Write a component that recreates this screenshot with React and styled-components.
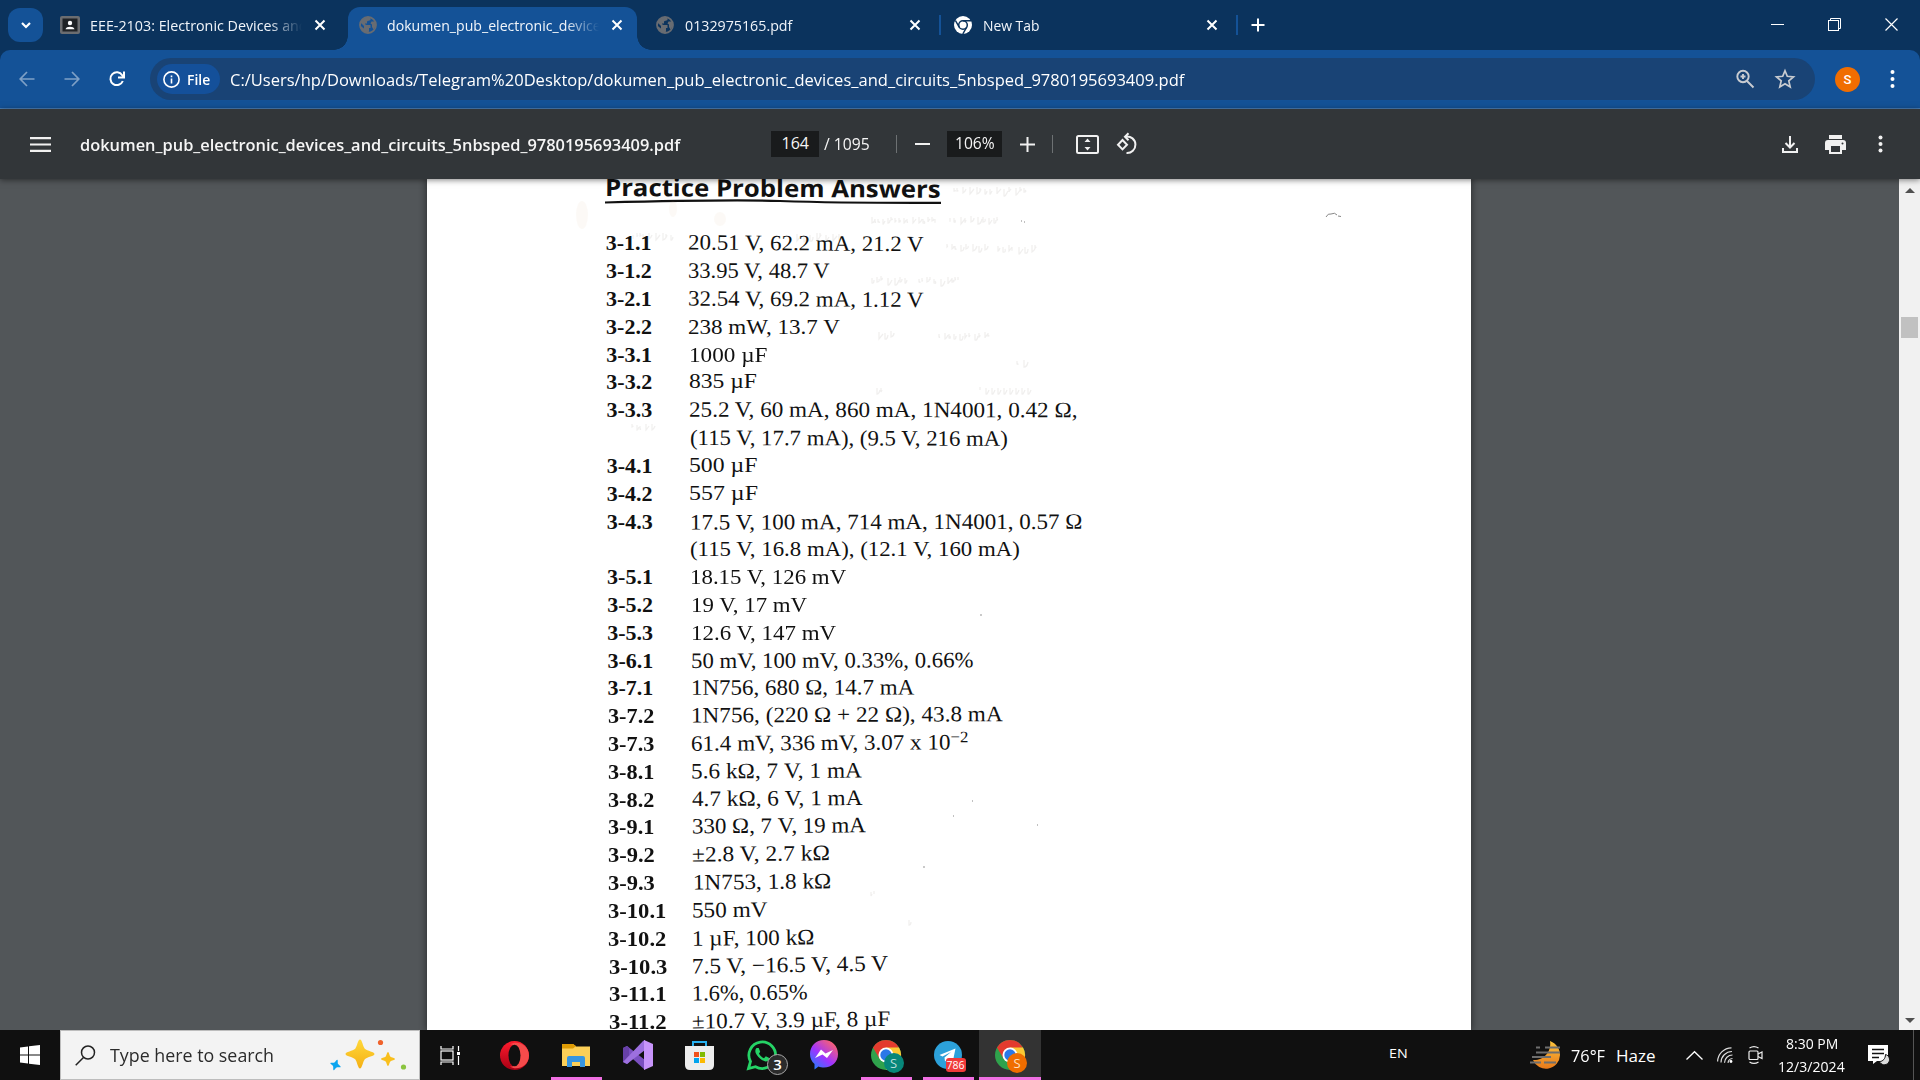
import React, { useLayoutEffect, useRef, useState } from "react";
import styled, { createGlobalStyle, css } from "styled-components";

const ui = `"Open Sans", "Noto Sans", sans-serif`;
const book = `"Liberation Serif", serif`;

const Global = createGlobalStyle`
  * { box-sizing: border-box; }
  body { margin: 0; overflow: hidden; background: #0b335d; font-family: ${ui}; }
  svg { display: block; flex: none; overflow: visible; }
`;

/* Text set to an exact measure, as in justified type */
const Measure = styled.span`
  display: inline-block;
  flex: none;
  width: ${(p) => p.$w}px;
  white-space: pre;
`;
const Glyphs = styled.span`
  display: inline-block;
  transform-origin: 0 75%;
`;
function Fit({ w, tilt = 0, lift = 0, children }) {
  const ref = useRef(null);
  const [k, setK] = useState(1);
  useLayoutEffect(() => {
    setK(w / ref.current.offsetWidth);
  }, [w]);
  return (
    <Measure $w={w}>
      <Glyphs ref={ref} style={{ transform: `translateY(${lift}px) rotate(${tilt}deg) scaleX(${k})` }}>
        {children}
      </Glyphs>
    </Measure>
  );
}

const Screen = styled.div`
  width: 1920px;
  height: 1080px;
  display: flex;
  flex-direction: column;
  overflow: hidden;
`;

/* ---------- tab strip ---------- */
const TabStrip = styled.header`
  height: 50px;
  flex: none;
  display: flex;
  align-items: flex-start;
  padding-left: 8px;
  background: #0b335d;
`;
const TabSearch = styled.button`
  width: 35px;
  height: 34px;
  margin-top: 8px;
  padding: 0;
  border: 0;
  border-radius: 12px;
  background: #145297;
  display: grid;
  place-items: center;
`;
const Tab = styled.div`
  position: relative;
  display: flex;
  align-items: center;
  width: ${(p) => p.$w}px;
  height: 43px;
  margin-top: 7px;
  padding: 0 ${(p) => p.$pr || 14}px 7px ${(p) => p.$pl}px;
  color: #f1f5fa;
  font-size: 14.5px;
  ${(p) =>
    p.$active &&
    css`
      background: #145297;
      border-radius: 12px 12px 0 0;
      &::before, &::after {
        content: "";
        position: absolute;
        bottom: 0;
        width: 14px;
        height: 14px;
      }
      &::before { left: -14px; background: radial-gradient(circle at 0 0, transparent 13.5px, #145297 14px); }
      &::after { right: -14px; background: radial-gradient(circle at 100% 0, transparent 13.5px, #145297 14px); }
    `}
`;
const TabTitle = styled.div`
  flex: 1;
  min-width: 0;
  overflow: hidden;
  margin-left: ${(p) => p.$gap}px;
  line-height: 24px;
  padding-top: 1px;
  ${(p) => p.$fade && css`mask-image: linear-gradient(90deg, #000 178px, transparent 212px);`}
`;
const TabDivider = styled.i`
  width: 2px;
  height: 20px;
  margin-top: 15px;
  background: #145297;
`;
const NewTab = styled.div`
  width: 40px;
  height: 50px;
  display: grid;
  place-items: center;
`;
const WindowButtons = styled.div`
  margin-left: auto;
  display: flex;
  height: 50px;
`;
const WinButton = styled.div`
  width: 57px;
  display: grid;
  place-items: center;
  padding-bottom: 1px;
`;

/* ---------- address bar ---------- */
const Toolbar = styled.div`
  height: 59px;
  flex: none;
  display: flex;
  align-items: center;
  padding: 0 0 0 17px;
  background: #145297;
  border-radius: 10px 10px 0 0;
  border-bottom: 1px solid #4a7fb8;
`;
const NavButton = styled.div`
  width: ${(p) => p.$w || 20}px;
  margin-right: ${(p) => p.$mr}px;
  display: grid;
  place-items: center;
  opacity: ${(p) => (p.$dim ? 0.45 : 1)};
`;
const Omnibox = styled.div`
  width: 1665px;
  height: 42px;
  border-radius: 21px;
  background: #194375;
  display: flex;
  align-items: center;
  padding: 0 20px 0 7px;
  color: #fff;
  font-size: 17px;
`;
const Url = styled.div`
  padding-top: 1px;
`;
const FileChip = styled.div`
  width: 63px;
  height: 30px;
  border-radius: 15px;
  background: #14509a;
  display: flex;
  align-items: center;
  gap: 7px;
  padding-left: 6px;
  margin-right: 10px;
  font-size: 14.5px;
  font-weight: 600;
`;
const OmniActions = styled.div`
  margin-left: auto;
  display: flex;
  gap: 20px;
`;
const Avatar = styled.div`
  width: 25px;
  height: 25px;
  border-radius: 50%;
  margin: 0 30px 0 20px;
  background: #f06d00;
  color: #fff;
  font: 500 13px/25px Roboto, sans-serif;
  text-align: center;
`;

/* ---------- PDF toolbar ---------- */
const PdfBar = styled.div`
  position: relative;
  z-index: 2;
  height: 70px;
  flex: none;
  display: flex;
  align-items: center;
  padding: 0 32px 0 30px;
  background: #323639;
  color: #f5f5f5;
  font-size: 16px;
  box-shadow: 0 1px 6px rgba(0, 0, 0, 0.5);
`;
const PdfTitle = styled.div`
  width: 720px;
  padding-left: 29px;
  font-size: 16.8px;
  font-weight: 600;
`;
const Field = styled.div`
  width: ${(p) => p.$w}px;
  height: 26px;
  line-height: 25px;
  background: #191b1c;
  display: flex;
  justify-content: center;
`;
const PageTotal = styled.div`
  width: 77px;
  padding-left: 5px;
`;
const Rule = styled.i`
  width: 1px;
  height: 18px;
  background: #6d7173;
`;
const PdfIcon = styled.div`
  width: ${(p) => p.$w}px;
  display: grid;
  place-items: center;
`;
const FitGroup = styled.div`
  display: flex;
  align-items: center;
  gap: 17px;
  padding-left: 23px;
`;
const PdfActions = styled.div`
  margin-left: auto;
  display: flex;
  align-items: center;
`;

/* ---------- document ---------- */
const Viewer = styled.main`
  height: 851px;
  flex: none;
  display: flex;
  background: #525659;
  overflow: hidden;
`;
const Canvas = styled.div`
  flex: 1;
  padding-left: 427px;
`;
const Sheet = styled.article`
  position: relative;
  width: 1044px;
  height: 100%;
  overflow: hidden;
  background: #fff;
  color: #111;
  padding-left: 178px;
`;
const SheetEdge = styled.div`
  width: 1044px;
  height: 100%;
  box-shadow: 0 0 7px 1px rgba(0, 0, 0, 0.45);
`;
const Heading = styled.h1`
  margin: -8px 0 0;
  height: 51px;
  font: 700 24px/31px ${ui};
`;
const Underline = styled.div`
  height: 8px;
  margin-top: -24px;
`;
const Ghosts = styled.svg`
  position: absolute;
  left: 0;
  top: 0;
`;
const Rows = styled.div`
  padding: 23.4px 0 0 0.8px;
`;
const Row = styled.div`
  display: flex;
  height: 27.82px;
  line-height: 27.82px;
  font-family: ${book};
  font-size: 22px;
`;
const Label = styled.div`
  width: ${(p) => 82.5 - p.$dx}px;
  margin-left: ${(p) => p.$dx}px;
  font-weight: 700;
`;
const Answer = styled.div`
  margin-left: ${(p) => p.$dx}px;
`;
const Sup = styled.sup`
  font-size: 16px;
  line-height: 0;
  vertical-align: 7px;
`;
const Scroll = styled.div`
  width: 21px;
  background: #f1f1f1;
  display: flex;
  flex-direction: column;
  align-items: center;
`;
const Arrow = styled.i`
  border: 5px solid transparent;
  ${(p) => (p.$up ? "border-bottom-color: #505050; border-top: 0; margin-top: 9px;" : "border-top-color: #505050; border-bottom: 0; margin: auto 0 7px;")}
`;
const Thumb = styled.i`
  width: 17px;
  height: 21px;
  margin-top: 124px;
  background: #c1c1c1;
`;

/* [label, label width, answer, answer width, start x, tilt, lift] */
const answers = [
  ["3-1.1", 46, "20.51 V, 62.2 mA, 21.2 V", 235.5, 0, 0.45, -0.5],
  ["3-1.2", 46, "33.95 V, 48.7 V", 141.5, 0, 0.1, -0.2],
  ["3-2.1", 46, "32.54 V, 69.2 mA, 1.12 V", 235.5, 0, 0.35, -0.4],
  ["3-2.2", 46, "238 mW, 13.7 V", 152, 0, 0, -0.5],
  ["3-3.1", 46, "1000 µF", 78, 1, 0, 0],
  ["3-3.2", 46, "835 µF", 67.5, 0.5, 0, -0.7],
  ["3-3.3", 46, "25.2 V, 60 mA, 860 mA, 1N4001, 0.42 Ω,", 388, 1, 0.1, -0.3],
  ["", 0, "(115 V, 17.7 mA), (9.5 V, 216 mA)", 318, 2, 0.15, 0],
  ["3-4.1", 46, "500 µF", 68, 0.5, 0, -0.7],
  ["3-4.2", 46, "557 µF", 68.5, 0.5, 0, -0.7],
  ["3-4.3", 46, "17.5 V, 100 mA, 714 mA, 1N4001, 0.57 Ω", 392.5, 1.5, -0.1, 0.5],
  ["", 0, "(115 V, 16.8 mA), (12.1 V, 160 mA)", 330, 2, 0, 0.3],
  ["3-5.1", 46, "18.15 V, 126 mV", 156, 2.2, 0, 0],
  ["3-5.2", 46, "19 V, 17 mV", 116.5, 2.8, 0, 0],
  ["3-5.3", 46, "12.6 V, 147 mV", 145, 2.8, 0, 0],
  ["3-6.1", 46, "50 mV, 100 mV, 0.33%, 0.66%", 282.5, 2.8, -0.15, 0],
  ["3-7.1", 46, "1N756, 680 Ω, 14.7 mA", 223.5, 3.2, -0.05, -0.3],
  ["3-7.2", 46.5, "1N756, (220 Ω + 22 Ω), 43.8 mA", 312, 3.2, -0.25, -0.5],
  ["3-7.3", 46.5, <>61.4 mV, 336 mV, 3.07 x 10<Sup>−2</Sup></>, 277, 3.2, -0.3, -0.3],
  ["3-8.1", 46.5, "5.6 kΩ, 7 V, 1 mA", 170.5, 3.2, -0.3, -0.6],
  ["3-8.2", 46.5, "4.7 kΩ, 6 V, 1 mA", 170, 3.6, -0.4, -0.9],
  ["3-9.1", 46.5, "330 Ω, 7 V, 19 mA", 174, 3.6, -0.4, -0.6],
  ["3-9.2", 47, "±2.8 V, 2.7 kΩ", 138, 3.3, -0.6, -0.4],
  ["3-9.3", 47, "1N753, 1.8 kΩ", 138, 4.3, -0.5, -0.5],
  ["3-10.1", 58.5, "550 mV", 76, 3.6, -0.5, -0.6],
  ["3-10.2", 58.5, "1 µF, 100 kΩ", 123, 4.2, -0.6, -0.3],
  ["3-10.3", 58.5, "7.5 V, −16.5 V, 4.5 V", 196, 3.6, -0.9, -0.4],
  ["3-11.1", 58, "1.6%, 0.65%", 116, 4.2, -0.7, -0.4],
  ["3-11.2", 58, "±10.7 V, 3.9 µF, 8 µF", 198, 3.4, -0.8, -0.4],
];

/* Faint show-through of the reverse side of the scanned leaf: [x, y, length] */
const ghostLines = [
  [527, 8, 75], [445, 38, 66], [523, 37, 50],
  [520, 65, 40], [571, 66, 40], [445, 97, 34], [492, 98, 44],
  [370, 54, 46], [206, 54, 40], [452, 152, 14], [512, 153, 50], [590, 180, 10], [553, 207, 50], [450, 208, 8],
  [205, 245, 24], [444, 712, 8], [482, 740, 6],
];
const wiggle = (x, y, n) => {
  let d = "";
  for (let i = 0, s = x + y; i < n; s = (s * 37 + 11) % 101, i += 3 + (s % 5)) {
    const h = 3 + (s % 5);
    d += `M${x + i} ${y + (s % 3)}v${h}q${s % 4} ${(s % 3) - 1} ${s % 5} -${h - 2}`;
  }
  return d;
};

/* ---------- taskbar ---------- */
const Taskbar = styled.footer`
  height: 50px;
  flex: none;
  display: flex;
  background: #101010;
  color: #fff;
`;
const Start = styled.div`
  width: 60px;
  display: grid;
  place-items: center;
`;
const Search = styled.div`
  width: 360px;
  display: flex;
  align-items: center;
  padding-left: 14px;
  background: #f3f3f3;
  border: 1px solid #bdbdbd;
  color: #2b2b2b;
  font-size: 17.5px;
`;
const SearchText = styled.div`
  margin: 0 56px 0 14px;
`;
const App62 = styled.div`
  position: relative;
  width: ${(p) => p.$w || 62}px;
  padding-right: ${(p) => p.$pr || 0}px;
  display: grid;
  place-items: center;
  background: ${(p) => (p.$active ? "#333" : "transparent")};
  ${(p) =>
    (p.$open || p.$active) &&
    css`
      &::after {
        content: "";
        position: absolute;
        bottom: 0;
        left: ${p.$active ? 0 : 6}px;
        right: ${p.$active ? 0 : 5}px;
        height: 3px;
        background: #f06fe2;
      }
    `}
`;
const Badge = styled.span`
  position: absolute;
  left: ${(p) => p.$x}px;
  top: ${(p) => p.$y}px;
  width: ${(p) => p.$w}px;
  height: ${(p) => p.$h}px;
  line-height: ${(p) => p.$h - (p.$ring ? 2 : 0)}px;
  border-radius: ${(p) => p.$r}px;
  border: ${(p) => (p.$ring ? "1px solid #a8a8a8" : "0")};
  background: ${(p) => p.$bg};
  color: ${(p) => p.$fg || "#fff"};
  font-size: ${(p) => p.$fs}px;
  font-weight: ${(p) => p.$fw || 400};
  text-align: center;
`;
const Tray = styled.div`
  margin-left: auto;
  width: 531px;
  display: flex;
  align-items: center;
`;
const Slot = styled.div`
  width: ${(p) => p.$w}px;
  font-size: ${(p) => p.$fs || 17}px;
  flex: none;
`;
const Clock = styled.div`
  width: 89px;
  height: 50px;
  display: flex;
  flex-direction: column;
  align-items: center;
  padding-top: 2px;
  font-size: 14.5px;
  line-height: 23px;
`;
const Peek = styled.i`
  width: 1px;
  height: 50px;
  background: #555;
`;

/* ---------- icons ---------- */
const Cross = ({ s = 10, w = 2, c = "#fff" }) => (
  <svg width={s} height={s} viewBox={`0 0 ${s} ${s}`} stroke={c} strokeWidth={w}>
    <path d={`M.5 .5L${s - 0.5} ${s - 0.5}M${s - 0.5} .5L.5 ${s - 0.5}`} />
  </svg>
);
const Globe = () => (
  <svg width="18" height="18" viewBox="0 0 18 18">
    <circle cx="9" cy="9" r="8" fill="none" stroke="#686c72" strokeWidth="1.8" />
    <path d="M2 5C4 2 8 .6 11.500 1.500V4C10 5 9 4.500 8 5.500V7.500H6C6 9 7 9 9 9H11.500V12H10V15.500L8.500 17C4 16.500 1 13 1 9.500L5 12.500V10L1 6Z M12.500 5.500L16 5.500L17 10L14.500 13.500L13 11V8.500L11.500 7.500Z" fill="#686c72" />
  </svg>
);
const Dots = ({ c = "#fff", gap = 7 }) => (
  <svg width="5" height="20" viewBox="0 0 5 20" fill={c}>
    <circle cx="2.500" cy={10 - gap} r="2" /><circle cx="2.500" cy="10" r="2" /><circle cx="2.500" cy={10 + gap} r="2" />
  </svg>
);
const Chrome = () => (
  <svg width="30" height="30" viewBox="0 0 30 30">
    <circle cx="15" cy="15" r="15" fill="#2fa24c" />
    <path d="M2 7.500A15 15 0 0 1 28 7.500L15 9L8.500 18.700Z" fill="#e33b2e" />
    <path d="M28 7.500A15 15 0 0 1 15 30L21.500 18.700L15 7.500Z" fill="#fcc934" />
    <circle cx="15" cy="15" r="7.500" fill="#fff" /><circle cx="15" cy="15" r="5.700" fill="#2a78e8" />
  </svg>
);
const Star4 = ({ x, y, r, f, rot = 0 }) => (
  <path transform={`translate(${x} ${y}) rotate(${rot}) scale(${r})`} fill={f}
    d="M0 -1C.14 -1 .19 -.55 .33 -.36C.5 -.2 1 -.15 1 0C1 .15 .5 .2 .33 .36C.19 .55 .14 1 0 1C-.14 1 -.19 .55 -.33 .36C-.5 .2 -1 .15 -1 0C-1 -.15 -.5 -.2 -.33 -.36C-.19 -.55 -.14 -1 0 -1Z" />
);

function Tabs() {
  return (
    <TabStrip>
      <TabSearch aria-label="Search tabs">
        <svg width="10" height="7" viewBox="0 0 10 7"><path d="M1 1L5 5L9 1" fill="none" stroke="#fff" strokeWidth="2.200" /></svg>
      </TabSearch>
      <Tab $w={305} $pl={17} $pr={23}>
        <svg width="20" height="18" viewBox="0 0 20 18"><rect width="20" height="18" rx="2" fill="#6b6d70" /><rect x="2.500" y="2.500" width="15" height="13" fill="#202326" /><circle cx="10" cy="7" r="2.200" fill="#fff" /><path d="M5.500 13.200C6 9.900 14 9.900 14.500 13.200Z" fill="#fff" /></svg>
        <TabTitle $gap={10} $fade><Fit w={218}>EEE-2103: Electronic Devices and</Fit></TabTitle>
        <Cross />
      </Tab>
      <Tab $active $w={289} $pl={11} $pr={15}>
        <Globe />
        <TabTitle $gap={10} $fade><Fit w={220}>dokumen_pub_electronic_devices</Fit></TabTitle>
        <Cross />
      </Tab>
      <Tab $w={302} $pl={19} $pr={19}>
        <Globe />
        <TabTitle $gap={11}><Fit w={107}>0132975165.pdf</Fit></TabTitle>
        <Cross />
      </Tab>
      <TabDivider />
      <Tab $w={295} $pl={13} $pr={19}>
        <svg width="18" height="18" viewBox="0 0 18 18"><circle cx="9" cy="9" r="9" fill="#fff" /><circle cx="9" cy="9" r="4.300" fill="none" stroke="#0b335d" strokeWidth="1.500" /><path d="M9 4.700H17M5.200 11.200L1.400 4.500M12.700 11.200L8.800 18" stroke="#0b335d" strokeWidth="1.500" /></svg>
        <TabTitle $gap={11}><Fit w={56.5}>New Tab</Fit></TabTitle>
        <Cross />
      </Tab>
      <TabDivider />
      <NewTab><svg width="14" height="14" viewBox="0 0 14 14"><path d="M7 .5V13.500M.5 7H13.500" stroke="#fff" strokeWidth="2" /></svg></NewTab>
      <WindowButtons>
        <WinButton><svg width="13" height="13"><path d="M0 6.500H13" stroke="#fff" /></svg></WinButton>
        <WinButton><svg width="13" height="13" fill="none" stroke="#fff"><rect x=".5" y="2.500" width="10" height="10" /><path d="M2.500 2.500V.5H12.500V10.500H10.500" /></svg></WinButton>
        <WinButton><Cross s={13} w={1.2} /></WinButton>
      </WindowButtons>
    </TabStrip>
  );
}

function AddressBar() {
  const arrow = { fill: "none", stroke: "#fff", strokeWidth: 1.7 };
  return (
    <Toolbar>
      <NavButton $mr={25} $dim><svg width="16" height="16" viewBox="0 0 16 16" {...arrow}><path d="M15.500 8H1.500M8 1L1.200 8L8 15" /></svg></NavButton>
      <NavButton $mr={25} $dim><svg width="16" height="16" viewBox="0 0 16 16" {...arrow}><path d="M.5 8H14.500M8 1L14.800 8L8 15" /></svg></NavButton>
      <NavButton $mr={23}><svg width="16" height="16" viewBox="0 0 16 16" fill="none" stroke="#fff" strokeWidth="2"><path d="M13.800 10A6.400 6.400 0 1 1 13.200 4.200L14.500 6M15 .5V6.500H9" /></svg></NavButton>
      <Omnibox>
        <FileChip>
          <svg width="17" height="17" viewBox="0 0 17 17"><circle cx="8.500" cy="8.500" r="7.600" fill="none" stroke="#fff" strokeWidth="1.600" /><path d="M8.500 7.500V12.500M8.500 4.500V6.200" stroke="#fff" strokeWidth="1.600" /></svg>
          <Fit w={23}>File</Fit>
        </FileChip>
        <Url><Fit w={954}>C:/Users/hp/Downloads/Telegram%20Desktop/dokumen_pub_electronic_devices_and_circuits_5nbsped_9780195693409.pdf</Fit></Url>
        <OmniActions>
          <svg width="20" height="20" viewBox="0 0 20 20" fill="none" stroke="#c9ccd1" strokeWidth="1.900"><circle cx="8" cy="7.500" r="5.700" /><path d="M12 12L18.500 18.500M8 5V10M5.500 7.500H10.500" /></svg>
          <svg width="20" height="20" viewBox="0 0 20 20" fill="none" stroke="#c9ccd1" strokeWidth="1.700"><path d="M10 1.700L12.300 7.300L18.500 7.900L13.800 11.900L15.200 18L10 14.700L4.800 18L6.200 11.900L1.500 7.900L7.700 7.300Z" /></svg>
        </OmniActions>
      </Omnibox>
      <Avatar>S</Avatar>
      <Dots />
    </Toolbar>
  );
}

function PdfControls() {
  return (
    <>
      <Field $w={48}><Fit w={27}>164</Fit></Field>
      <PageTotal><Fit w={46}>/ 1095</Fit></PageTotal>
      <Rule />
      <PdfIcon $w={50}><svg width="15" height="2"><path d="M0 1H15" stroke="#f1f1f1" strokeWidth="2" /></svg></PdfIcon>
      <Field $w={55}><Fit w={40}>106%</Fit></Field>
      <PdfIcon $w={50}><svg width="15" height="15"><path d="M0 7.500H15M7.500 0V15" stroke="#f1f1f1" strokeWidth="2" /></svg></PdfIcon>
      <Rule />
      <FitGroup>
        <svg width="23" height="19" viewBox="0 0 23 19"><rect x="1" y="1" width="21" height="17" rx="1.500" fill="none" stroke="#f1f1f1" strokeWidth="2" /><path d="M11.500 3.500L14.500 7H8.500ZM11.500 15.500L14.500 12H8.500Z" fill="#f1f1f1" /></svg>
        <svg width="22" height="22" viewBox="0 0 22 22" fill="none" stroke="#f1f1f1" strokeWidth="2"><path d="M6.500 7L11 11.700L6.500 16.400L2 11.700Z" /><path d="M10 3.500A8.300 8.300 0 1 1 10.500 20M12.500 .3L9 3.700L12.500 7.200" /></svg>
      </FitGroup>
    </>
  );
}

function PdfToolbar() {
  return (
    <PdfBar>
      <svg width="21" height="15" viewBox="0 0 21 15"><path d="M0 1.200H21M0 7.500H21M0 13.800H21" stroke="#f1f1f1" strokeWidth="2.200" /></svg>
      <PdfTitle><Fit w={600}>dokumen_pub_electronic_devices_and_circuits_5nbsped_9780195693409.pdf</Fit></PdfTitle>
      <PdfControls />
      <PdfActions>
        <PdfIcon $w={16}><svg width="16" height="17" viewBox="0 0 16 17" fill="none" stroke="#f1f1f1" strokeWidth="2"><path d="M8 0V10.500M3.500 7L8 11.500L12.500 7M1 12V16H15V12" /></svg></PdfIcon>
        <PdfIcon $w={74}><svg width="21" height="19" viewBox="0 0 21 19" fill="#f1f1f1"><path d="M4 0H17V4H4Z" /><path fillRule="evenodd" d="M3 5H18A3 3 0 0 1 21 8V15H17V19H4V15H0V8A3 3 0 0 1 3 5ZM6 11V17H15V11ZM17.500 7.500A1 1 0 1 0 17.500 9.500A1 1 0 1 0 17.500 7.500Z" /></svg></PdfIcon>
        <PdfIcon $w={16}><Dots c="#f1f1f1" gap={6.5} /></PdfIcon>
      </PdfActions>
    </PdfBar>
  );
}

function Document() {
  return (
    <Viewer>
      <Canvas>
        <SheetEdge>
          <Sheet>
            <Ghosts width="1044" height="851" fill="none">
              <g stroke="#8a8078" strokeWidth="1.300" opacity=".12">
                {ghostLines.map(([x, y, n]) => <path key={`${x}-${y}`} d={wiggle(x, y, n)} />)}
              </g>
              <g fill="#d9b48a" opacity=".07"><ellipse cx="155" cy="36" rx="6" ry="14" /><ellipse cx="246" cy="30" rx="4" ry="8" /><ellipse cx="293" cy="40" rx="6" ry="7" /></g>
              <path d="M899 38q2 -4 5 -3M904 35q4 -2 6 1M911 37l3 .5" stroke="#888" strokeWidth="1" />
              <path d="M594 42h1M597 43h1M545 622h1M526 637h1M497 687v2M610 646h1M554 435v2" stroke="#777" strokeWidth="1.300" opacity=".6" />
            </Ghosts>
            <Heading><Fit w={335} tilt={0.3}>Practice Problem Answers</Fit></Heading>
            <Underline>
              <svg width="336" height="8"><path d="M0 4.500C60 3 130 1.500 175 3C220 4.500 280 5 336 4.800" fill="none" stroke="#111" strokeWidth="2.200" /></svg>
            </Underline>
            <Rows>
              {answers.map(([label, lw, text, w, dx, tilt, lift], i) => (
                <Row key={i}>
                  <Label $dx={(i / 28) * 3}>{label && <Fit w={lw}>{label}</Fit>}</Label>
                  <Answer $dx={dx}><Fit w={w} tilt={tilt} lift={lift}>{text}</Fit></Answer>
                </Row>
              ))}
            </Rows>
          </Sheet>
        </SheetEdge>
      </Canvas>
      <Scroll><Arrow $up /><Thumb /><Arrow /></Scroll>
    </Viewer>
  );
}

function TaskbarRow() {
  return (
    <Taskbar>
      <Start><svg width="20" height="20" viewBox="0 0 20 20" fill="#fff"><path d="M0 2.500L8 1.500V9.500H0ZM9 1.300L20 0V9.500H9ZM0 10.500H8V18.500L0 17.500ZM9 10.500H20V20L9 18.700Z" /></svg></Start>
      <Search>
        <svg width="21" height="21" viewBox="0 0 21 21" fill="none" stroke="#222" strokeWidth="1.500"><circle cx="13" cy="7.500" r="6.500" /><path d="M8.500 12.500L.7 20.300" /></svg>
        <SearchText><Fit w={164}>Type here to search</Fit></SearchText>
        <svg width="78" height="32" viewBox="0 0 78 32">
          <defs><linearGradient id="gold" x2="0" y2="1"><stop stopColor="#ffd83a" /><stop offset="1" stopColor="#f5b014" /></linearGradient></defs>
          <Star4 x={30} y={15} r={14.5} f="url(#gold)" /><Star4 x={58} y={20} r={7} f="#f9bf1d" /><Star4 x={5.5} y={26} r={5.5} f="#0aa5ef" rot={20} />
          <circle cx="50.500" cy="3.500" r="2.600" fill="#f0622b" /><circle cx="73.500" cy="28" r="2.600" fill="#8ac43f" />
        </svg>
      </Search>
      <App62 $w={63} $pr={3}>
        <svg width="21" height="19" viewBox="0 0 21 19" fill="none" stroke="#fff" strokeWidth="1.200"><path d="M1 0V3H13V0M1 19V16H13V19M18.500 0V5M18.500 10V19" /><rect x="1" y="5" width="12" height="9" /><rect x="17" y="6" width="3" height="3" fill="#fff" stroke="none" /></svg>
      </App62>
      <App62>
        <svg width="29" height="29" viewBox="0 0 29 29"><defs><linearGradient id="op" x2="0" y2="1"><stop stopColor="#ff1b2d" /><stop offset="1" stopColor="#a70014" /></linearGradient></defs><circle cx="14.500" cy="14.500" r="14.500" fill="url(#op)" /><path d="M10 3.500C16 -1 29 3 29 14.500S16 30 10 25.500C20 27 20 2 10 3.500Z" fill="#f54b4b" /><ellipse cx="14.500" cy="14.500" rx="6" ry="10.800" fill="#101010" /></svg>
      </App62>
      <App62 $open>
        <svg width="28" height="23" viewBox="0 0 28 23"><path d="M0 1Q0 0 1 0H11L14 2.500H28V22H0Z" fill="#fccf57" /><path d="M0 1Q0 0 1 0H11L14 2L11 4.500H0Z" fill="#de9b04" /><path d="M5 23V14Q5 12 7 12H21Q23 12 23 14V23H18V18H10V23Z" fill="#3795e0" /></svg>
      </App62>
      <App62>
        <svg width="30" height="30" viewBox="0 0 30 30"><path d="M0 8L4 6L22 20V30L0 10Z" fill="#7a4fc0" /><path d="M0 22V8L4 6L6 7.500V22.500L4 24Z" fill="#6740a8" /><path d="M22 0V10L4 24L0 22L20 1Z" fill="#9d70df" /><path d="M21 0L30 4V26L21 30Z" fill="#c794fa" /></svg>
      </App62>
      <App62 $pr={1}>
        <svg width="29" height="29" viewBox="0 0 29 29"><path d="M8 6V1H21V6" fill="none" stroke="#27b0f0" strokeWidth="2" /><path d="M0 5H29V24Q29 29 24 29H5Q0 29 0 24Z" fill="#ededed" /><path d="M9 11H14V16H9Z" fill="#f1511b" /><path d="M15 11H20V16H15Z" fill="#80bb03" /><path d="M9 17H14V22H9Z" fill="#00a3ee" /><path d="M15 17H20V22H15Z" fill="#fbb901" /></svg>
      </App62>
      <App62>
        <svg width="30" height="30" viewBox="0 0 30 30"><path d="M1.500 28.500L3.500 21.500A13.300 13.300 0 1 1 8.500 26.700Z" fill="none" stroke="#25d366" strokeWidth="2.800" /><path d="M9.500 8C8 9.500 7.800 12 9.500 14.500C12 18.300 15 20.800 18.500 21.500C21 21.500 22.500 20 22.300 18L18.800 16.300L17 18.200C15 17.500 12.800 15.300 12 13.500L13.200 11.800L11.700 8Z" fill="#25d366" /></svg>
        <Badge $x={36} $y={24} $w={21} $h={21} $r={11} $ring $bg="#2b2b2b" $fs={15} $fw={600}>3</Badge>
      </App62>
      <App62>
        <svg width="28" height="30" viewBox="0 0 28 30"><defs><linearGradient id="ms" x1="0" y1="1" x2=".8" y2="0"><stop stopColor="#0a8cff" /><stop offset=".5" stopColor="#a033ff" /><stop offset="1" stopColor="#ff6568" /></linearGradient></defs><path d="M14 0C22 0 28 6 28 14S22 27.500 14 27.500C12 27.500 10 27.200 8.500 26.500L4.500 29.500V24C1.500 21.500 0 18 0 14C0 6 6 0 14 0Z" fill="url(#ms)" /><path d="M5 18L11 9.500L15.500 13.500L23 10L17 18L12.500 14.500Z" fill="#fff" /></svg>
      </App62>
      <App62 $open><Chrome /><Badge $x={28.5} $y={22.5} $w={20} $h={20} $r={10} $bg="#07877a" $fg="#b9dfda" $fs={13}>S</Badge></App62>
      <App62 $open>
        <svg width="28" height="28" viewBox="0 0 28 28"><circle cx="14" cy="14" r="14" fill="#2ca1da" /><path d="M5.500 14L21.500 7.500L18.500 22L13.500 18L11 20.500L10.500 16.500L17 11L8.500 15.500Z" fill="#fff" /></svg>
        <Badge $x={28.5} $y={28} $w={20} $h={14} $r={3} $bg="#f03a3a" $fs={10.5}>786</Badge>
      </App62>
      <App62 $active><Chrome /><Badge $x={28} $y={22.5} $w={20} $h={20} $r={10} $bg="#f06d00" $fg="#ffe0c0" $fs={13}>S</Badge></App62>
      <Tray>
        <Slot $w={141} $fs={13.5}><Fit w={19} lift={-2}>EN</Fit></Slot>
        <Slot $w={41}>
          <svg width="31" height="28" viewBox="0 0 31 28"><defs><linearGradient id="mn" x2="0" y2="1"><stop stopColor="#fdc43c" /><stop offset="1" stopColor="#e8791a" /></linearGradient></defs><path d="M20 0C27 3 30 8 30 14A14 14 0 0 1 3 19C12 20 22 12 20 0Z" fill="url(#mn)" /><path d="M6 6.500H10M15 6.500H30M6 11.500H30M2 16H21M0 21.500H11M14 21.500H26" stroke="#6e6e6e" strokeWidth="2.200" /></svg>
        </Slot>
        <Slot $w={45}><Fit w={34.5}>76°F</Fit></Slot>
        <Slot $w={70}><Fit w={40}>Haze</Fit></Slot>
        <Slot $w={31}><svg width="17" height="9"><path d="M.5 8.500L8.500 .7L16.500 8.500" fill="none" stroke="#fff" strokeWidth="1.300" /></svg></Slot>
        <Slot $w={31}><svg width="16" height="16" viewBox="0 0 16 16" fill="none" stroke="#ddd" strokeWidth="1.200"><path d="M.6 14.500A14 14 0 0 1 14.500 .8M4 15.500A11 11 0 0 1 15 4.500M7.500 15.800A8 8 0 0 1 15.500 8M11 15.800A5 5 0 0 1 15.500 11.500" /><circle cx="14" cy="14.500" r="1.400" fill="#fff" stroke="none" /></svg></Slot>
        <Slot $w={19}><svg width="15" height="18" viewBox="0 0 15 18" fill="none" stroke="#eee" strokeWidth="1.200"><rect x="1" y="5" width="9" height="8.500" rx="1" /><path d="M10 8L14 6V12.500L10 10.500M1.500 2Q6 -.8 10.500 2M1.500 16Q6 18.800 10.500 16" /></svg></Slot>
        <Clock><Fit w={52}>8:30 PM</Fit><Fit w={67}>12/3/2024</Fit></Clock>
        <Slot $w={12} />
        <Slot $w={45}>
          <svg width="21" height="20" viewBox="0 0 21 20"><path d="M0 0H20V16H9L5 19V16H0Z" fill="#fff" /><path d="M4 4.500H16M4 8.500H16M4 12.500H11" stroke="#111" strokeWidth="1.400" /><path d="M17.500 9.500A5.200 5.200 0 1 1 11.500 16.500C15 16.500 17.500 13.500 17.500 9.500Z" fill="#ddd" stroke="#111" /></svg>
        </Slot>
        <Peek />
      </Tray>
    </Taskbar>
  );
}

export default function App() {
  return (
    <>
      <Global />
      <Screen>
        <Tabs />
        <AddressBar />
        <PdfToolbar />
        <Document />
        <TaskbarRow />
      </Screen>
    </>
  );
}
